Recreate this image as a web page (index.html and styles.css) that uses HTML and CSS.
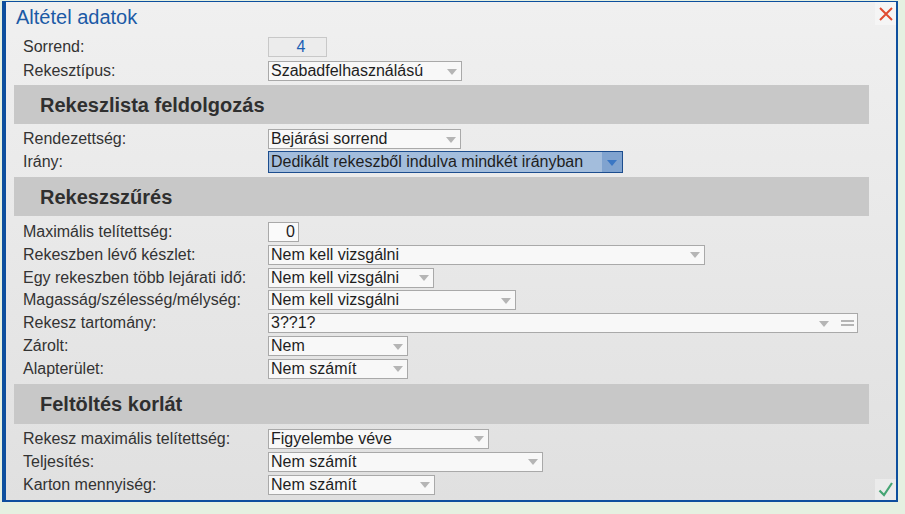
FILE: index.html
```html
<!DOCTYPE html>
<html lang="hu">
<head>
<meta charset="utf-8">
<title>Altétel adatok</title>
<link rel="stylesheet" href="styles.css">
</head>
<body>
<div class="dialog">
  <div class="header">
    <div class="title">Altétel adatok</div>
    <button class="iconbtn" aria-label="Bezárás">
      <svg width="14" height="14" viewBox="0 0 14 14"><path d="M1 1 L13 13 M13 1 L1 13" stroke="#e04b31" stroke-width="2" fill="none"/></svg>
    </button>
  </div>

  <div class="rows rows-top">
    <div class="row"><span class="label">Sorrend:</span><span class="field ro w59">4</span></div>
    <div class="row"><span class="label">Rekesztípus:</span><span class="field select w194"><span class="val">Szabadfelhasználású</span><span class="caret"></span></span></div>
  </div>

  <div class="band">Rekeszlista feldolgozás</div>
  <div class="rows rows-b">
    <div class="row"><span class="label">Rendezettség:</span><span class="field select w193"><span class="val">Bejárási sorrend</span><span class="caret"></span></span></div>
    <div class="row"><span class="label">Irány:</span><span class="field select focus w355"><span class="val">Dedikált rekeszből indulva mindkét irányban</span><span class="caret-box"><span class="caret blue"></span></span></span></div>
  </div>

  <div class="band">Rekeszszűrés</div>
  <div class="rows rows-c">
    <div class="row"><span class="label">Maximális telítettség:</span><span class="field num w31">0</span></div>
    <div class="row"><span class="label">Rekeszben lévő készlet:</span><span class="field select w437"><span class="val">Nem kell vizsgálni</span><span class="caret"></span></span></div>
    <div class="row"><span class="label">Egy rekeszben több lejárati idő:</span><span class="field select w166"><span class="val">Nem kell vizsgálni</span><span class="caret"></span></span></div>
    <div class="row"><span class="label">Magasság/szélesség/mélység:</span><span class="field select w248"><span class="val">Nem kell vizsgálni</span><span class="caret"></span></span></div>
    <div class="row"><span class="label">Rekesz tartomány:</span><span class="field select w590"><span class="val">3??1?</span><span class="caret"></span><span class="eq"></span></span></div>
    <div class="row"><span class="label">Zárolt:</span><span class="field select w140"><span class="val">Nem</span><span class="caret"></span></span></div>
    <div class="row"><span class="label">Alapterület:</span><span class="field select w140"><span class="val">Nem számít</span><span class="caret"></span></span></div>
  </div>

  <div class="band band-last">Feltöltés korlát</div>
  <div class="rows rows-d">
    <div class="row"><span class="label">Rekesz maximális telítettség:</span><span class="field select w221"><span class="val">Figyelembe véve</span><span class="caret"></span></span></div>
    <div class="row"><span class="label">Teljesítés:</span><span class="field select w275"><span class="val">Nem számít</span><span class="caret"></span></span></div>
    <div class="row"><span class="label">Karton mennyiség:</span><span class="field select w167"><span class="val">Nem számít</span><span class="caret"></span></span>
      <button class="iconbtn ok" aria-label="OK">
        <svg width="16" height="16" viewBox="0 0 16 16"><path d="M1.5 9.5 L6 14 L14 2" stroke="#45a574" stroke-width="2.2" fill="none"/></svg>
      </button>
    </div>
  </div>
</div>
</body>
</html>
```

FILE: styles.css
```css
body {
  margin: 0;
  background: #e5f0e1;
  font-family: "Liberation Sans", Arial, sans-serif;
}

.dialog {
  box-sizing: border-box;
  width: 896px;
  height: 501px;
  margin: 1px 0 0 2px;
  border-style: solid;
  border-color: #0d4f9e;
  border-width: 1px 2px 2px 4px;
  background: linear-gradient(#f0f0f0, #e0e0e0);
  display: flex;
  flex-direction: column;
}

.header {
  height: 35px;
  display: flex;
  justify-content: space-between;
  align-items: flex-start;
  flex-shrink: 0;
}

.title {
  padding: 3px 0 0 10px;
  font-size: 20px;
  line-height: 24px;
  color: #1b5aa6;
}

.iconbtn {
  width: 21px;
  height: 23px;
  padding: 0;
  border: 0;
  background: #f5f5f5;
  display: flex;
  align-items: center;
  justify-content: center;
  flex-shrink: 0;
}

.iconbtn.ok {
  margin-left: auto;
  align-self: flex-start;
  margin-top: 4px;
  height: 21px;
  background: #ebebeb;
}

.rows {
  display: flex;
  flex-direction: column;
  padding-left: 17px;
}

.rows-top { gap: 4px; padding-bottom: 4px; }
.rows-b { gap: 3px; padding-top: 5px; padding-bottom: 5px; }
.rows-c { gap: 2.83px; padding-top: 6px; padding-bottom: 5px; }
.rows-d { gap: 3px; padding-top: 5px; }

.row {
  display: flex;
  align-items: center;
  height: 20px;
}

.label {
  width: 245px;
  flex-shrink: 0;
  font-size: 16px;
  color: #333333;
  white-space: nowrap;
}

.field {
  box-sizing: border-box;
  height: 20px;
  border: 1px solid #a9a9a9;
  background: #f8f8f8;
  display: flex;
  align-items: center;
  padding-left: 2px;
  font-size: 16px;
  color: #1e1e1e;
  white-space: nowrap;
  flex-shrink: 0;
}

.field .val {
  flex: 1;
  overflow: hidden;
}

.field.ro {
  background: #ececec;
  border-color: #c8c8c8;
  color: #1a5fb4;
  justify-content: center;
  padding-left: 7px;
}

.field.num {
  background: #fafafa;
  justify-content: flex-end;
  padding-right: 3px;
}

.caret {
  width: 0;
  height: 0;
  border-left: 5.5px solid transparent;
  border-right: 5.5px solid transparent;
  border-top: 6px solid #b5b5b5;
  margin-right: 4px;
  margin-top: 1px;
}

.eq {
  box-sizing: border-box;
  width: 13px;
  height: 6px;
  border-top: 2px solid #b5b5b5;
  border-bottom: 2px solid #b5b5b5;
  margin-left: 8px;
  margin-right: 3px;
}

.field.focus {
  height: 22px;
  margin: -1px 0;
  border-color: #1c4d8e;
  background: #a3bddc;
  padding-right: 0;
}

.caret-box {
  align-self: stretch;
  width: 20px;
  background: #80a3cf;
  display: flex;
  align-items: center;
  justify-content: center;
}

.caret.blue {
  border-left-width: 5px;
  border-right-width: 5px;
  border-top: 6px solid #3a77c4;
  margin: 1px 0 0 0;
}

.band {
  box-sizing: border-box;
  margin-left: 8px;
  width: 855px;
  height: 39px;
  flex-shrink: 0;
  background: #c8c8c8;
  padding: 2px 0 0 26px;
  display: flex;
  align-items: center;
  font-size: 20px;
  font-weight: bold;
  color: #2f2f2f;
}

.band-last {
  height: 40px;
}

.w31 { width: 31px; }
.w59 { width: 59px; }
.w140 { width: 140px; }
.w166 { width: 166px; }
.w167 { width: 167px; }
.w193 { width: 193px; }
.w194 { width: 194px; }
.w221 { width: 221px; }
.w248 { width: 248px; }
.w275 { width: 275px; }
.w355 { width: 355px; }
.w437 { width: 437px; }
.w590 { width: 590px; }
```
